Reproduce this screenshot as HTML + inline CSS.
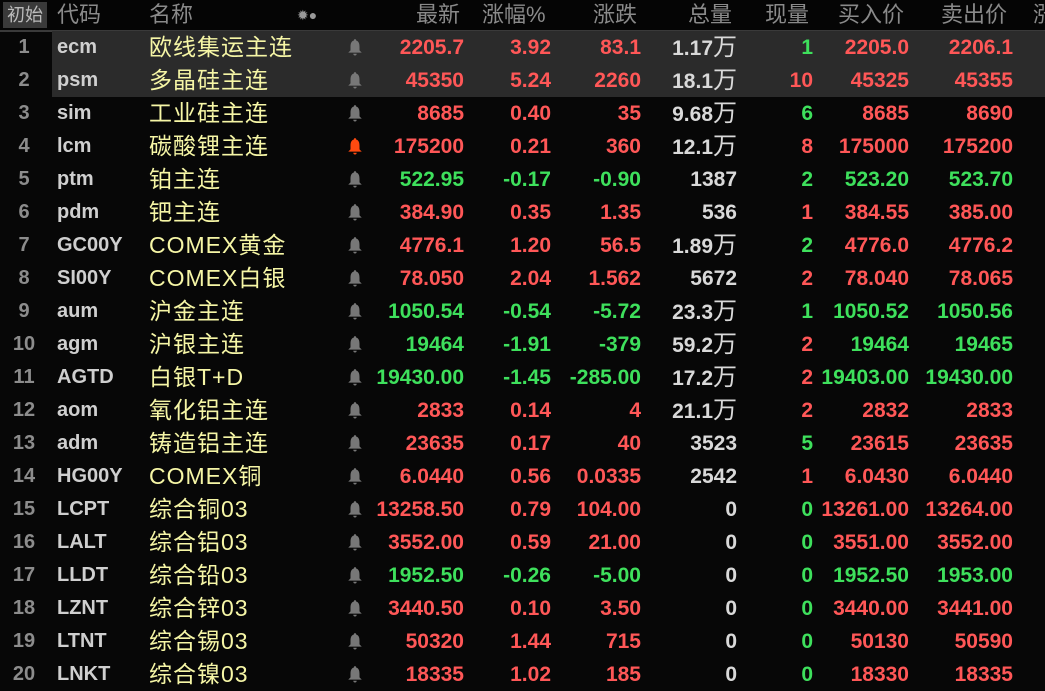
<!DOCTYPE html>
<html><head><meta charset="utf-8"><style>
body{margin:0;width:1045px;height:691px;background:#070707;overflow:hidden;font-family:"Liberation Sans","Noto Sans CJK SC",sans-serif;}
.hd{position:absolute;top:0;left:0;width:1045px;height:30px;background:#050505;border-bottom:2px solid #3a3a3a;color:#8a8a8a;font-size:22px;line-height:30px;}
.hd span{position:absolute;white-space:nowrap}
.btn{left:3px;top:2px;width:44px;height:26px;background:#3a3a3a;color:#bbb;font-size:18px;line-height:26px;text-align:center}
.row{position:absolute;left:0;width:1045px;height:33px;line-height:33px;font-size:21px;font-weight:bold}
.row span{position:absolute;white-space:nowrap}
.hl{background:#2b2b2b;left:52px;width:993px;height:33px;position:absolute;top:0}
.i{left:0;width:48px;text-align:center;color:#8c8c8c;font-size:20px}
.c{left:57px;color:#cfcfcf;font-size:20px}
.n{left:149px;color:#f6f6a6;font-weight:normal;font-size:23px;letter-spacing:1px}
.b{left:347px;top:7px;width:16px;height:18px}
.r{text-align:right;width:130px}
.p{left:334px}.z{left:421px}.d{left:511px}.v{left:607px;color:#d9d9d9}.q{left:683px}.bi{left:779px}.as{left:883px}
.R{color:#ff5757}.G{color:#3ee05c}
.w{font-weight:normal;font-size:24px}
</style></head><body>
<div class="hd">
<span class="btn">初始</span>
<span style="left:57px">代码</span><span style="left:149px">名称</span>
<span style="left:297px;font-size:14px;color:#999">✹●</span>
<span style="left:416px">最新</span><span style="left:482px">涨幅%</span><span style="left:593px">涨跌</span>
<span style="left:688px">总量</span><span style="left:765px">现量</span><span style="left:838px">买入价</span><span style="left:941px">卖出价</span><span style="left:1033px">涨</span>
</div>
<svg width="0" height="0" style="position:absolute"><defs><symbol id="bell" viewBox="0 0 14 16"><path d="M7 1a1 1 0 0 1 1 1.2C10.5 3 11 5 11 8v3l2 2H1l2-2V8c0-3 .5-5 3-5.8A1 1 0 0 1 7 1zM5.5 14h3a1.5 1.5 0 0 1-3 0z"/></symbol></defs></svg>
<div id="rows">
<div class="row" style="top:31px"><div class="hl"></div><span class="i">1</span><span class="c">ecm</span><span class="n">欧线集运主连</span><svg class="b" style="position:absolute" fill="#777"><use href="#bell"/></svg><span class="r p R">2205.7</span><span class="r z R">3.92</span><span class="r d R">83.1</span><span class="r v">1.17<span class="w" style="position:static">万</span></span><span class="r q G">1</span><span class="r bi R">2205.0</span><span class="r as R">2206.1</span></div>
<div class="row" style="top:64px"><div class="hl"></div><span class="i">2</span><span class="c">psm</span><span class="n">多晶硅主连</span><svg class="b" style="position:absolute" fill="#777"><use href="#bell"/></svg><span class="r p R">45350</span><span class="r z R">5.24</span><span class="r d R">2260</span><span class="r v">18.1<span class="w" style="position:static">万</span></span><span class="r q R">10</span><span class="r bi R">45325</span><span class="r as R">45355</span></div>
<div class="row" style="top:97px"><span class="i">3</span><span class="c">sim</span><span class="n">工业硅主连</span><svg class="b" style="position:absolute" fill="#777"><use href="#bell"/></svg><span class="r p R">8685</span><span class="r z R">0.40</span><span class="r d R">35</span><span class="r v">9.68<span class="w" style="position:static">万</span></span><span class="r q G">6</span><span class="r bi R">8685</span><span class="r as R">8690</span></div>
<div class="row" style="top:130px"><span class="i">4</span><span class="c">lcm</span><span class="n">碳酸锂主连</span><svg class="b" style="position:absolute" fill="#ff4a10"><use href="#bell"/></svg><span class="r p R">175200</span><span class="r z R">0.21</span><span class="r d R">360</span><span class="r v">12.1<span class="w" style="position:static">万</span></span><span class="r q R">8</span><span class="r bi R">175000</span><span class="r as R">175200</span></div>
<div class="row" style="top:163px"><span class="i">5</span><span class="c">ptm</span><span class="n">铂主连</span><svg class="b" style="position:absolute" fill="#777"><use href="#bell"/></svg><span class="r p G">522.95</span><span class="r z G">-0.17</span><span class="r d G">-0.90</span><span class="r v">1387</span><span class="r q G">2</span><span class="r bi G">523.20</span><span class="r as G">523.70</span></div>
<div class="row" style="top:196px"><span class="i">6</span><span class="c">pdm</span><span class="n">钯主连</span><svg class="b" style="position:absolute" fill="#777"><use href="#bell"/></svg><span class="r p R">384.90</span><span class="r z R">0.35</span><span class="r d R">1.35</span><span class="r v">536</span><span class="r q R">1</span><span class="r bi R">384.55</span><span class="r as R">385.00</span></div>
<div class="row" style="top:229px"><span class="i">7</span><span class="c">GC00Y</span><span class="n">COMEX黄金</span><svg class="b" style="position:absolute" fill="#777"><use href="#bell"/></svg><span class="r p R">4776.1</span><span class="r z R">1.20</span><span class="r d R">56.5</span><span class="r v">1.89<span class="w" style="position:static">万</span></span><span class="r q G">2</span><span class="r bi R">4776.0</span><span class="r as R">4776.2</span></div>
<div class="row" style="top:262px"><span class="i">8</span><span class="c">SI00Y</span><span class="n">COMEX白银</span><svg class="b" style="position:absolute" fill="#777"><use href="#bell"/></svg><span class="r p R">78.050</span><span class="r z R">2.04</span><span class="r d R">1.562</span><span class="r v">5672</span><span class="r q R">2</span><span class="r bi R">78.040</span><span class="r as R">78.065</span></div>
<div class="row" style="top:295px"><span class="i">9</span><span class="c">aum</span><span class="n">沪金主连</span><svg class="b" style="position:absolute" fill="#777"><use href="#bell"/></svg><span class="r p G">1050.54</span><span class="r z G">-0.54</span><span class="r d G">-5.72</span><span class="r v">23.3<span class="w" style="position:static">万</span></span><span class="r q G">1</span><span class="r bi G">1050.52</span><span class="r as G">1050.56</span></div>
<div class="row" style="top:328px"><span class="i">10</span><span class="c">agm</span><span class="n">沪银主连</span><svg class="b" style="position:absolute" fill="#777"><use href="#bell"/></svg><span class="r p G">19464</span><span class="r z G">-1.91</span><span class="r d G">-379</span><span class="r v">59.2<span class="w" style="position:static">万</span></span><span class="r q R">2</span><span class="r bi G">19464</span><span class="r as G">19465</span></div>
<div class="row" style="top:361px"><span class="i">11</span><span class="c">AGTD</span><span class="n">白银T+D</span><svg class="b" style="position:absolute" fill="#777"><use href="#bell"/></svg><span class="r p G">19430.00</span><span class="r z G">-1.45</span><span class="r d G">-285.00</span><span class="r v">17.2<span class="w" style="position:static">万</span></span><span class="r q R">2</span><span class="r bi G">19403.00</span><span class="r as G">19430.00</span></div>
<div class="row" style="top:394px"><span class="i">12</span><span class="c">aom</span><span class="n">氧化铝主连</span><svg class="b" style="position:absolute" fill="#777"><use href="#bell"/></svg><span class="r p R">2833</span><span class="r z R">0.14</span><span class="r d R">4</span><span class="r v">21.1<span class="w" style="position:static">万</span></span><span class="r q R">2</span><span class="r bi R">2832</span><span class="r as R">2833</span></div>
<div class="row" style="top:427px"><span class="i">13</span><span class="c">adm</span><span class="n">铸造铝主连</span><svg class="b" style="position:absolute" fill="#777"><use href="#bell"/></svg><span class="r p R">23635</span><span class="r z R">0.17</span><span class="r d R">40</span><span class="r v">3523</span><span class="r q G">5</span><span class="r bi R">23615</span><span class="r as R">23635</span></div>
<div class="row" style="top:460px"><span class="i">14</span><span class="c">HG00Y</span><span class="n">COMEX铜</span><svg class="b" style="position:absolute" fill="#777"><use href="#bell"/></svg><span class="r p R">6.0440</span><span class="r z R">0.56</span><span class="r d R">0.0335</span><span class="r v">2542</span><span class="r q R">1</span><span class="r bi R">6.0430</span><span class="r as R">6.0440</span></div>
<div class="row" style="top:493px"><span class="i">15</span><span class="c">LCPT</span><span class="n">综合铜03</span><svg class="b" style="position:absolute" fill="#777"><use href="#bell"/></svg><span class="r p R">13258.50</span><span class="r z R">0.79</span><span class="r d R">104.00</span><span class="r v">0</span><span class="r q G">0</span><span class="r bi R">13261.00</span><span class="r as R">13264.00</span></div>
<div class="row" style="top:526px"><span class="i">16</span><span class="c">LALT</span><span class="n">综合铝03</span><svg class="b" style="position:absolute" fill="#777"><use href="#bell"/></svg><span class="r p R">3552.00</span><span class="r z R">0.59</span><span class="r d R">21.00</span><span class="r v">0</span><span class="r q G">0</span><span class="r bi R">3551.00</span><span class="r as R">3552.00</span></div>
<div class="row" style="top:559px"><span class="i">17</span><span class="c">LLDT</span><span class="n">综合铅03</span><svg class="b" style="position:absolute" fill="#777"><use href="#bell"/></svg><span class="r p G">1952.50</span><span class="r z G">-0.26</span><span class="r d G">-5.00</span><span class="r v">0</span><span class="r q G">0</span><span class="r bi G">1952.50</span><span class="r as G">1953.00</span></div>
<div class="row" style="top:592px"><span class="i">18</span><span class="c">LZNT</span><span class="n">综合锌03</span><svg class="b" style="position:absolute" fill="#777"><use href="#bell"/></svg><span class="r p R">3440.50</span><span class="r z R">0.10</span><span class="r d R">3.50</span><span class="r v">0</span><span class="r q G">0</span><span class="r bi R">3440.00</span><span class="r as R">3441.00</span></div>
<div class="row" style="top:625px"><span class="i">19</span><span class="c">LTNT</span><span class="n">综合锡03</span><svg class="b" style="position:absolute" fill="#777"><use href="#bell"/></svg><span class="r p R">50320</span><span class="r z R">1.44</span><span class="r d R">715</span><span class="r v">0</span><span class="r q G">0</span><span class="r bi R">50130</span><span class="r as R">50590</span></div>
<div class="row" style="top:658px"><span class="i">20</span><span class="c">LNKT</span><span class="n">综合镍03</span><svg class="b" style="position:absolute" fill="#777"><use href="#bell"/></svg><span class="r p R">18335</span><span class="r z R">1.02</span><span class="r d R">185</span><span class="r v">0</span><span class="r q G">0</span><span class="r bi R">18330</span><span class="r as R">18335</span></div>
</div>
</body></html>
